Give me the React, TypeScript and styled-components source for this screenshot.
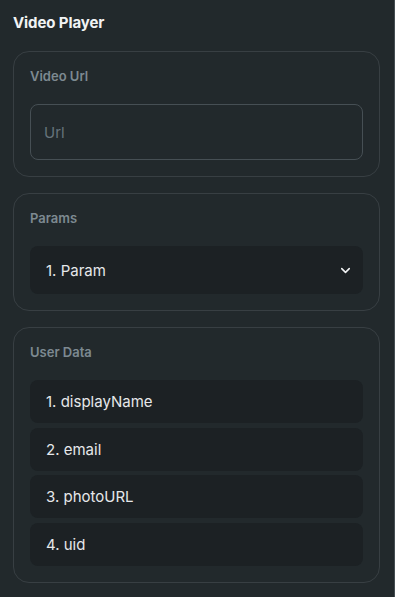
import React from 'react';
import styled, { createGlobalStyle } from 'styled-components'
import { ChevronDown } from 'lucide-react'

const GlobalStyle = createGlobalStyle`
  html, body {
    margin: 0;
    padding: 0;
    background-color: #22292c;
  }
  * {
    box-sizing: border-box;
  }
`

const Panel = styled.main`
  width: 395px;
  min-height: 597px;
  padding: 13px 14px 16px 13px;
  background-color: #22292c;
  border-right: 1px solid #454d51;
  font-family: Inter, "Noto Sans", sans-serif;
  display: flex;
  flex-direction: column;
`

const Title = styled.h1`
  margin: 0 0 18px;
  font-size: 15px;
  line-height: 20px;
  font-weight: 700;
  color: #f1f3f4;
  letter-spacing: -0.1px;
`

const Stack = styled.div`
  display: flex;
  flex-direction: column;
  gap: 16px;
`

const Section = styled.section`
  border: 1px solid #383f43;
  border-radius: 16px;
  padding: 15px 16px 16px;
  display: flex;
  flex-direction: column;
`

const SectionLabel = styled.h2`
  margin: 0 0 19px;
  font-size: 13px;
  line-height: 18px;
  font-weight: 600;
  color: #7d8991;
`

const UrlInput = styled.input`
  height: 56px;
  width: 100%;
  padding: 0 13px;
  border: 1px solid #464f54;
  border-radius: 8px;
  background: transparent;
  font-family: inherit;
  font-size: 15px;
  color: #e3e6e8;
  outline: none;

  &::placeholder {
    color: #66737b;
  }
`

const SelectBox = styled.div`
  height: 48px;
  padding: 0 10px 0 16px;
  border-radius: 8px;
  background-color: #1c2124;
  display: flex;
  align-items: center;
  justify-content: space-between;
  color: #e6e8ea;
  font-size: 15px;
`

const ItemList = styled.ul`
  list-style: none;
  margin: 0;
  padding: 0;
  display: flex;
  flex-direction: column;
  gap: 4.5px;
`

const Item = styled.li`
  height: 43px;
  padding: 0 16px;
  border-radius: 8px;
  background-color: #1c2124;
  display: flex;
  align-items: center;
  color: #e6e8ea;
  font-size: 15px;
`

const userData = ['displayName', 'email', 'photoURL', 'uid']

export default function App() {
    return (
        <>
            <GlobalStyle/>
            <Panel>
                <Title>Video Player</Title>
                <Stack>
                    <Section>
                        <SectionLabel>Video Url</SectionLabel>
                        <UrlInput placeholder='Url'/>
                    </Section>
                    <Section>
                        <SectionLabel>Params</SectionLabel>
                        <SelectBox>
                            <span>1. Param</span>
                            <ChevronDown size={15} strokeWidth={2.5} color='#f1f3f4'/>
                        </SelectBox>
                    </Section>
                    <Section>
                        <SectionLabel>User Data</SectionLabel>
                        <ItemList>
                            {userData.map((name, i) => <Item key={name}>{i + 1}. {name}</Item>)}
                        </ItemList>
                    </Section>
                </Stack>
            </Panel>
        </>
    );
}
